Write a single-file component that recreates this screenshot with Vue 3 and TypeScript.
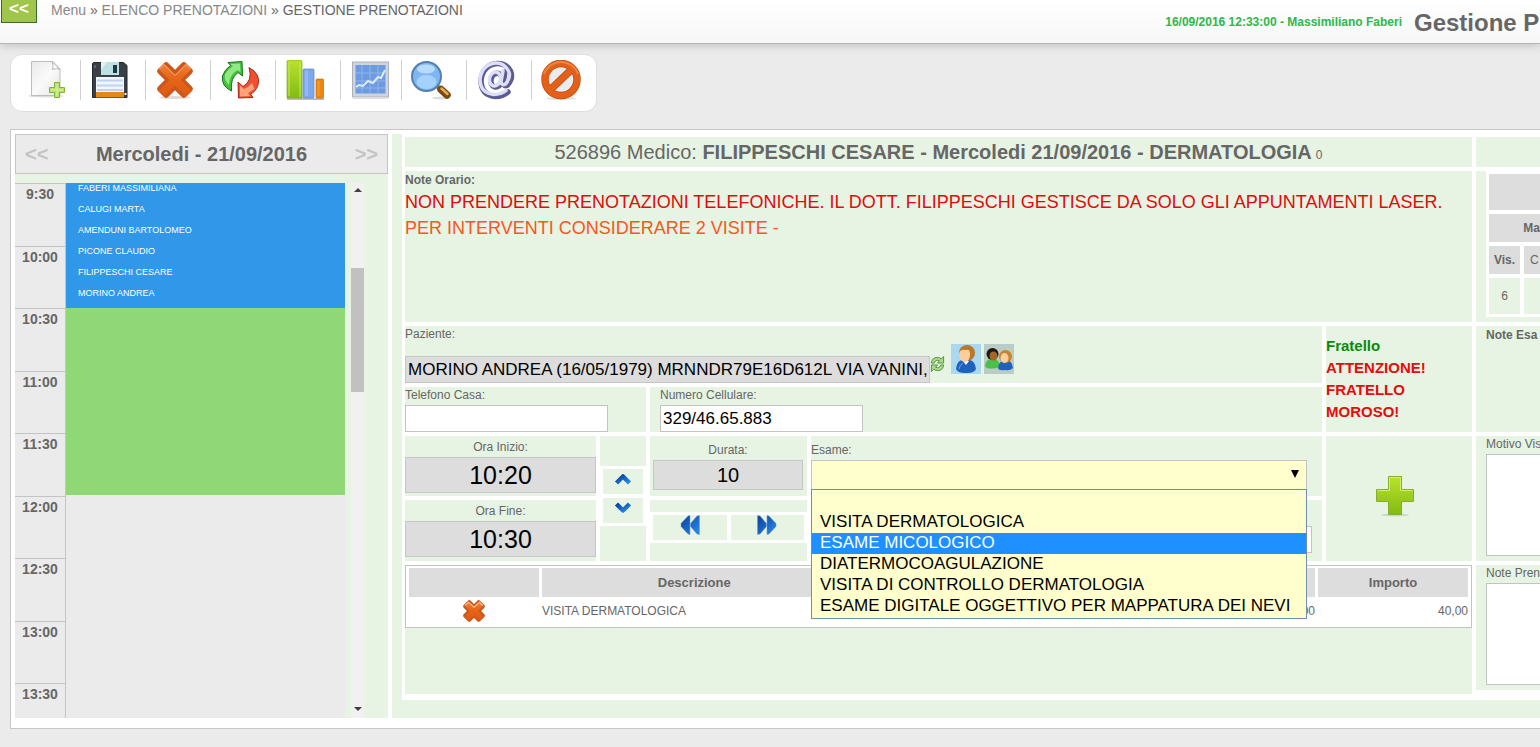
<script setup lang="ts">
import { ref } from 'vue'

const hours: string[] = ['9:30', '10:00', '10:30', '11:00', '11:30', '12:00', '12:30', '13:00', '13:30']
const bookings: string[] = [
  'FABERI MASSIMILIANA',
  'CALUGI MARTA',
  'AMENDUNI BARTOLOMEO',
  'PICONE CLAUDIO',
  'FILIPPESCHI CESARE',
  'MORINO ANDREA',
]
const exams: string[] = [
  '',
  'VISITA DERMATOLOGICA',
  'ESAME MICOLOGICO',
  'DIATERMOCOAGULAZIONE',
  'VISITA DI CONTROLLO DERMATOLOGIA',
  'ESAME DIGITALE OGGETTIVO PER MAPPATURA DEI NEVI',
]
const highlighted = ref(2)
const patient = ref('MORINO ANDREA (16/05/1979) MRNNDR79E16D612L VIA VANINI,')
const homePhone = ref('')
const mobile = ref('329/46.65.883')
const start = ref('10:20')
const end = ref('10:30')
const duration = ref('10')
const exam = ref('')
const examNote = ref('')
const reason = ref('')
const bookingNote = ref('')
</script>

<template>
  <div class="page">
    <header class="top">
      <button class="back" type="button">&lt;&lt;</button>
      <nav class="crumbs">
        <a href="#">Menu</a> » <a href="#">ELENCO PRENOTAZIONI</a> » <span class="current">GESTIONE PRENOTAZIONI</span>
      </nav>
      <div class="session">16/09/2016 12:33:00 - Massimiliano Faberi</div>
      <h1>Gestione P</h1>
    </header>

    <div class="toolbar">
      <button type="button" aria-label="Nuovo">
        <svg viewBox="0 0 40 40">
          <defs>
            <linearGradient id="paper" x1="0" y1="0" x2="1" y2="1"><stop offset="0" stop-color="#e9e9e9" /><stop offset=".5" stop-color="#fafafa" /><stop offset="1" stop-color="#e4e4e4" /></linearGradient>
            <linearGradient id="lime" x1="0" y1="0" x2="0" y2="1"><stop offset="0" stop-color="#b9e22c" /><stop offset="1" stop-color="#82bb13" /></linearGradient>
            <linearGradient id="orange" gradientUnits="userSpaceOnUse" x1="0" y1="0" x2="0" y2="40"><stop offset="0" stop-color="#f08a45" /><stop offset=".4" stop-color="#e8681c" /><stop offset="1" stop-color="#dd5510" /></linearGradient>
            <linearGradient id="azure" x1="0" y1="0" x2="1" y2="1"><stop offset="0" stop-color="#0a3f98" /><stop offset="1" stop-color="#2b8cf0" /></linearGradient>
          </defs>
          <ellipse cx="19" cy="36" rx="18" ry="1.5" fill="#ddd" />
          <path d="M4.500 1.500H26L33 9V35.500H4.500Z" fill="url(#paper)" stroke="#bdbdbd" />
          <path d="M25 1.500Q27 6 25.500 9.500Q30 7.500 33 9.500Z" fill="#fff" stroke="#b5b5b5" />
          <path d="M27.500 22.500h5v5h5v5h-5v5h-5v-5h-5v-5h5Z" fill="#b9e36b" stroke="#7fb03a" />
          <path d="M30 24v12M24 30h12" stroke="#d9f3a0" />
        </svg>
      </button>
      <button type="button" aria-label="Salva">
        <svg viewBox="0 0 40 40">
          <path d="M3.500 2.500h30l3.500 3V37.500H2.500V3.500Z" fill="#3b3f46" stroke="#24272c" />
          <rect x="4" y="5" width="2" height="3" fill="#5d6470" /><rect x="34.500" y="33" width="2" height="2" fill="#fff" />
          <rect x="11" y="2" width="18" height="13" fill="#bfe0e3" />
          <path d="M11 2h6l-6 8Z" fill="#e3f3f4" />
          <rect x="23" y="5" width="4" height="8" fill="#1f3844" />
          <rect x="6" y="17" width="28" height="15" fill="#f2f7fd" />
          <path d="M7 20.500h26M7 25.500h26M7 30h26" stroke="#bcd4f2" stroke-width="2" />
          <rect x="6" y="32" width="28" height="5.500" fill="#e08a1c" />
        </svg>
      </button>
      <button type="button" aria-label="Elimina">
        <svg viewBox="0 0 40 40">
          <ellipse cx="20" cy="37.500" rx="16" ry="1.500" fill="#e2d8d4" />
          <g fill="#c9581a" stroke="#c9581a" stroke-width="1.500"><rect x="13.500" y="1" width="13" height="38" rx="2.500" transform="rotate(45 20 20)" /><rect x="13.500" y="1" width="13" height="38" rx="2.500" transform="rotate(-45 20 20)" /></g>
          <path d="M9 3.500L20 14.500L31 3.500L36.500 9L25.500 20L36.500 31L31 36.500L20 25.500L9 36.500L3.500 31L14.500 20L3.500 9Z" fill="url(#orange)" />
          <path d="M4.500 9L9 4.500L20 15.500L31 4.500L35.500 9" fill="none" stroke="#f5a873" />
        </svg>
      </button>
      <button type="button" aria-label="Aggiorna">
        <svg viewBox="0 0 40 40">
          <path d="M8 2.500L22 1.500L22.500 16L18 12.500Q10 18 11.500 31Q1 26 2.500 16Q4.500 9.500 10.500 5.500Z" fill="#43c23c" stroke="#137516" stroke-linejoin="round" />
          <path d="M10.500 4L20 3.500L20.500 12L17.500 10Q9 15 9 25Q4 20 5 15Q7 10 13 6.500Z" fill="#92e884" />
          <path d="M29 7.500Q41 14 38 25Q35.500 32 30.500 34L33 37.500L18.500 38L18 22L23 26.500Q33 21 29 7.500Z" fill="#ef5130" stroke="#b02413" stroke-linejoin="round" />
          <path d="M20 25.500L24 29Q29 27 32 23L34.500 29L28 33L30 36L20 36.500Z" fill="#ffa27c" />
        </svg>
      </button>
      <button type="button" aria-label="Statistiche">
        <svg viewBox="0 0 40 40">
          <path d="M2 39h37" stroke="#bbb" stroke-width="2" />
          <path d="M2 1l2-1h12l1 2v36H2Z" fill="url(#lime)" stroke="#7ba91e" stroke-width=".7" />
          <path d="M4 3v33M15 3v34" stroke="#c8ec5b" stroke-width="1" />
          <rect x="18" y="9" width="11" height="29" rx="1" fill="#7ea8ec" stroke="#5d85ca" stroke-width=".7" /><rect x="20" y="11" width="3" height="25" fill="#92b7f2" />
          <rect x="31" y="19" width="7.500" height="19" rx="1" fill="#ee850f" stroke="#c96a06" stroke-width=".7" /><path d="M33.500 21v15" stroke="#f79a2e" stroke-width="2" />
        </svg>
      </button>
      <button type="button" class="narrow" aria-label="Grafico">
        <svg viewBox="0 0 40 40">
          <rect x="2.500" y="2" width="36" height="35" fill="#cfd4dd" stroke="#aab0bd" />
          <rect x="5.500" y="5" width="30" height="28.500" fill="#6c9be2" />
          <path d="M12 5v28M20 5v28M28 5v28M6 13h29M6 21h29M6 28h29" stroke="#8fb5ee" />
          <path d="M6 27l3-2 4 1 5-5 5 2 5-6 3 1 4-8" fill="none" stroke="#dfeafc" stroke-width="2" />
          <path d="M3 38h35" stroke="#ddd" stroke-width="2" />
        </svg>
      </button>
      <button type="button" aria-label="Cerca">
        <svg viewBox="0 0 40 40">
          <ellipse cx="30" cy="38" rx="9" ry="1.500" fill="#ddd" />
          <path d="M26 26l4 4" stroke="#777" stroke-width="4" />
          <path d="M30 29.500l6 5.500" stroke="#7a4a12" stroke-width="7.500" stroke-linecap="round" /><path d="M30.500 28.500l6 5.500" stroke="#e6ad55" stroke-width="2.500" stroke-linecap="round" />
          <circle cx="15.500" cy="16.500" r="14.500" fill="#7fb6f3" stroke="#5580ae" stroke-width="2" />
          <ellipse cx="15.500" cy="22" rx="10" ry="7" fill="#a5d2fd" /><ellipse cx="15" cy="9" rx="9" ry="4.500" fill="#b9dafa" />
        </svg>
      </button>
      <button type="button" aria-label="Email">
        <svg viewBox="0 0 40 40">
          <g fill="none" stroke-linecap="round">
            <g stroke="#5d5c92" stroke-width="5.500"><ellipse cx="20.500" cy="20" rx="5.500" ry="7" transform="rotate(15 20 20)" /><path d="M29 12l-2 11q1 4 4.500 2q6-7 3-14Q30 3 21 3.500Q7 5 5 20q0 15 14 16.500q8 0 13-4.500" /></g>
            <g stroke="#dedefa" stroke-width="3.500"><ellipse cx="19" cy="19" rx="5.500" ry="7" transform="rotate(15 19 19)" /><path d="M27 11l-2 11q1 4 4.500 2q6-7 3-13Q28 2.500 19.500 3Q6 4.500 4 19q0 14 14 15.500q7 0 12-4" /></g>
          </g>
        </svg>
      </button>
      <button type="button" aria-label="Annulla">
        <svg viewBox="0 0 40 40">
          <ellipse cx="20" cy="38.500" rx="15" ry="1.500" fill="#ddd" />
          <circle cx="20" cy="19.500" r="16" fill="#ececec" stroke="#c24d10" stroke-width="7.500" />
          <path d="M9 30L31 9" stroke="#c24d10" stroke-width="7.500" />
          <circle cx="20" cy="19.500" r="16" fill="none" stroke="#e2601a" stroke-width="6" /><path d="M9 30L31 9" stroke="#e2601a" stroke-width="6" />
          <path d="M3 14A18 18 0 0 1 37 14" fill="none" stroke="#ee8440" stroke-width="2" />
        </svg>
      </button>
    </div>

    <main class="panel">
      <section class="calendar">
        <div class="day">
          <button type="button">&lt;&lt;</button>
          <h2>Mercoledi - 21/09/2016</h2>
          <button type="button">&gt;&gt;</button>
        </div>
        <div class="agenda">
          <div class="slots">
            <div class="hours"><div v-for="h in hours" :key="h" class="hour">{{ h }}</div></div>
            <div class="events">
              <ul class="busy"><li v-for="b in bookings" :key="b">{{ b }}</li></ul>
              <div class="free"></div>
            </div>
          </div>
          <div class="scroll">
            <svg viewBox="0 0 8 4"><path d="M0 4L4 0L8 4Z" fill="#404040" /></svg>
            <div class="thumb"></div>
            <svg viewBox="0 0 8 4"><path d="M0 0L4 4L8 0Z" fill="#404040" /></svg>
          </div>
        </div>
      </section>

      <section class="booking">
        <div class="sheet">
          <div class="cell wide title">526896 Medico:&nbsp;<strong>FILIPPESCHI CESARE - Mercoledi 21/09/2016 - DERMATOLOGIA</strong><small>0</small></div>
          <div class="cell"></div>

          <div class="cell wide notes">
            <h3>Note Orario:</h3>
            <p class="red">NON PRENDERE PRENOTAZIONI TELEFONICHE. IL DOTT. FILIPPESCHI GESTISCE DA SOLO GLI APPUNTAMENTI LASER.</p>
            <p class="amber">PER INTERVENTI CONSIDERARE 2 VISITE -</p>
          </div>
          <div class="cell side">
            <table class="counts">
              <colgroup><col class="c-vis" /><col /></colgroup>
              <thead>
                <tr class="blank"><th colspan="2"></th></tr>
                <tr><th colspan="2" class="half">Ma</th></tr>
                <tr><th>Vis.</th><th class="cut">C</th></tr>
              </thead>
              <tbody><tr class="value"><td>6</td><td></td></tr></tbody>
            </table>
          </div>

          <div class="patient">
            <div class="cell person">
              <label for="paziente">Paziente:</label>
              <div class="line">
                <input id="paziente" v-model="patient" class="gray" readonly />
                <button type="button" class="reload" aria-label="Ricarica">
                  <svg viewBox="0 0 16 18">
                    <g fill="#a9d98a" stroke="#4f8f38"><path d="M1.500 8Q2 2 8 2Q10.500 2 12 3.500L14.500 1V8H8L10 5.500Q6 4 4.500 8Z" /><path d="M14.500 10Q14 16 8 16Q5.500 16 4 14.500L1.500 17V10H8L6 12.500Q10 14 11.500 10Z" /></g>
                  </svg>
                </button>
                <button type="button" class="face" aria-label="Anagrafica">
                  <svg viewBox="0 0 30 30">
                    <rect width="30" height="30" fill="#a9d8f0" />
                    <path d="M5 25Q6 16 12 16H19Q24 17 25 25Q23 29.500 15 29Q7 29.500 5 25Z" fill="#1e62bd" /><path d="M12 17l3 4 3-4Z" fill="#fff" />
                    <circle cx="16" cy="9" r="8" fill="#b9782a" /><path d="M8 10Q9 5 15 6Q19 5 19 10Q19 17 14 18Q8 17 8 10Z" fill="#fbcf9c" />
                    <path d="M8 25q1-5 4-6" stroke="#6aa8ea" fill="none" />
                  </svg>
                </button>
                <button type="button" class="face" aria-label="Familiari">
                  <svg viewBox="0 0 30 30">
                    <rect width="30" height="30" fill="#b9cdc6" />
                    <path d="M1 22Q2 15 7 15H11Q15 16 16 22Q13 25 8 24.500Q2 25 1 22Z" fill="#4ec04a" /><circle cx="8.500" cy="10" r="6" fill="#20180f" /><ellipse cx="9.500" cy="12" rx="4" ry="4.500" fill="#a5662b" />
                    <path d="M14 24Q15 17 19 17H25Q28 18 29 24Q26 27 21 26Q15 27 14 24Z" fill="#1e62bd" /><circle cx="21.500" cy="12.500" r="6.500" fill="#c8832c" /><ellipse cx="20.500" cy="14" rx="4" ry="5" fill="#fbcf9c" />
                  </svg>
                </button>
              </div>
            </div>
            <div class="cell phone"><label for="casa">Telefono Casa:</label><input id="casa" v-model="homePhone" /></div>
            <div class="cell phone mobile"><label for="cell">Numero Cellulare:</label><input id="cell" v-model="mobile" /></div>
          </div>
          <div class="cell warning"><p class="ok">Fratello</p><p>ATTENZIONE!</p><p>FRATELLO</p><p>MOROSO!</p></div>
          <div class="cell side"><h3>Note Esa</h3></div>

          <div class="times">
            <div class="stack halves">
              <div class="cell time"><label for="inizio">Ora Inizio:</label><input id="inizio" v-model="start" class="gray" readonly /></div>
              <div class="cell time"><label for="fine">Ora Fine:</label><input id="fine" v-model="end" class="gray" readonly /></div>
            </div>
            <div class="stack arrows">
              <div class="cell"></div>
              <div class="pair vertical">
                <button type="button" class="cell" aria-label="Prima"><svg viewBox="0 0 18 14"><path d="M2.500 11L9 4.500L15.500 11" fill="none" stroke="url(#azure)" stroke-width="4.500" stroke-linejoin="round" /></svg></button>
                <button type="button" class="cell" aria-label="Dopo"><svg viewBox="0 0 18 14"><path d="M2.500 3L9 9.500L15.500 3" fill="none" stroke="url(#azure)" stroke-width="4.500" stroke-linejoin="round" /></svg></button>
              </div>
              <div class="cell"></div>
            </div>
            <div class="stack length">
              <div class="cell duration"><label for="durata">Durata:</label><input id="durata" v-model="duration" class="gray" readonly /></div>
              <div class="cell gap"></div>
              <div class="pair">
                <button type="button" class="cell" aria-label="Riduci"><svg viewBox="0 0 20 20"><path d="M10 .500V19.500L8 19L1 11.500V8.500L8 1ZM19.500 .500V19.500L17 19L10.500 11.500V8.500L17 1Z" fill="url(#azure)" stroke="#6f9ad8" stroke-width=".5" /></svg></button>
                <button type="button" class="cell" aria-label="Aumenta"><svg viewBox="0 0 20 20"><path d="M.500 .500V19.500L3 19L9.500 11.500V8.500L3 1ZM10 .500V19.500L12 19L19 11.500V8.500L12 1Z" fill="url(#azure)" stroke="#6f9ad8" stroke-width=".5" /></svg></button>
              </div>
              <div class="cell"></div>
            </div>
            <div class="stack halves">
              <div class="cell exam">
                <label for="esame">Esame:</label>
                <div class="combo">
                  <select id="esame" v-model="exam"><option value=""></option></select>
                  <svg class="caret" viewBox="0 0 8 8"><path d="M0 0H8L4 8Z" /></svg>
                  <ul class="options" role="listbox" aria-label="Esame">
                    <li v-for="(e, i) in exams" :key="i" role="option" :aria-selected="i === highlighted" :class="{ active: i === highlighted }" @mouseenter="highlighted = i">{{ e }}</li>
                  </ul>
                </div>
              </div>
              <div class="cell detail"><input v-model="examNote" aria-label="Dettaglio esame" /></div>
            </div>
          </div>
          <div class="cell add">
            <button type="button" aria-label="Aggiungi">
              <svg viewBox="0 0 42 42"><ellipse cx="21" cy="40" rx="14" ry="1.500" fill="#cbd8c4" /><path d="M14.500 1.500h13v13h12v12h-12v13h-13v-13h-12v-12h12Z" fill="url(#lime)" stroke="#86ad2c" /><path d="M3.500 15.500h12V2.500h11v13h12" fill="none" stroke="#d3f06d" /></svg>
            </button>
          </div>
          <div class="cell side area"><label for="motivo">Motivo Vis</label><textarea id="motivo" v-model="reason"></textarea></div>

          <div class="cell wide">
            <table class="items">
              <colgroup><col class="c-del" /><col /><col /><col class="c-num" /><col class="c-sum" /></colgroup>
              <thead><tr><th></th><th>Descrizione</th><th></th><th></th><th>Importo</th></tr></thead>
              <tbody>
                <tr>
                  <td>
                    <button type="button" aria-label="Rimuovi">
                      <svg viewBox="0 0 40 40">
                        <g fill="#c9581a" stroke="#c9581a" stroke-width="2"><rect x="12" y="0" width="16" height="40" rx="3" transform="rotate(45 20 20)" /><rect x="12" y="0" width="16" height="40" rx="3" transform="rotate(-45 20 20)" /></g>
                        <path d="M10 3L20 12L30 3L37 10L28 20L37 30L30 37L20 28L10 37L3 30L12 20L3 10Z" fill="url(#orange)" />
                        <path d="M4 10L10 4L20 13L30 4L36 10" fill="none" stroke="#ffc291" stroke-width="2" />
                      </svg>
                    </button>
                  </td>
                  <td>VISITA DERMATOLOGICA</td><td></td><td class="num">00</td><td class="num">40,00</td>
                </tr>
              </tbody>
            </table>
          </div>
          <div class="cell side area last"><label for="noteprenotazione">Note Pren</label><textarea id="noteprenotazione" v-model="bookingNote"></textarea></div>
        </div>
      </section>
    </main>
  </div>
</template>

<style>
html, body { background: #ebebeb; }
</style>

<style scoped>
* { box-sizing: border-box; }
.page { min-height: 100vh; overflow: hidden; background: #ebebeb; color: #666; font: 12px/14px "Liberation Sans", Arial, sans-serif; }
button { margin: 0; padding: 0; border: 0; background: none; font: inherit; color: inherit; cursor: pointer; }
h1, h2, h3, p, ul { margin: 0; padding: 0; list-style: none; }
h3 { padding-top: 1px; font-size: 12px; line-height: 16px; }
svg { display: block; }
label { display: block; line-height: 17px; }
input, select, textarea { display: block; margin: 0; border: 1px solid #c3c3c3; border-radius: 0; background: #fff; color: #000; font: 17px "Liberation Sans", Arial, sans-serif; outline: 0; }
input { height: 27px; padding: 0 2px; }
input.gray { background: #ddd; border-color: #c6c6c6; }

.top { display: flex; align-items: flex-start; height: 44px; background: linear-gradient(#fff, #f7f7f7); border-bottom: 1px solid #b2b6b2; box-shadow: 0 1px 9px #bbb; white-space: nowrap; }
.back { width: 36px; height: 23px; margin-left: 1px; padding-bottom: 5px; border: 1px solid #3a6b35; border-top: 0; background: #9fc54d; color: #fff; font-size: 17px; font-weight: bold; line-height: 17px; }
.crumbs { margin-left: 14px; font-size: 14px; line-height: 20px; color: #666; }
.crumbs a { color: #888; text-decoration: none; }
.session { margin: 14px 12px 0 auto; color: #2db84b; font-weight: bold; line-height: 16px; }
h1 { width: 126px; margin-top: 8px; font-size: 24px; line-height: 30px; color: #666; }

.toolbar { display: flex; width: max-content; height: 58px; margin: 10px 0 0 10px; padding-top: 5px; border: 1px solid #dedede; border-radius: 12px; background: #fff; }
.toolbar button { height: 40px; padding: 0 15px 0 9px; border-left: 1px solid #d0d0d0; }
.toolbar button:first-child { padding: 0 13px 0 16px; border-left: 0; }
.toolbar .narrow { padding-right: 11px; }
.toolbar svg { width: 40px; height: 40px; }

.panel { display: flex; gap: 4px; margin: 17px 0 0 10px; padding: 4px 0 10px 4px; border: 1px solid #c9c5c9; border-right: 0; background: #fff; }
.calendar { flex: 0 0 373px; background: #e7f4e4; }
.day { display: flex; align-items: center; justify-content: space-between; height: 40px; padding: 0 9px; border: 1px solid #c4c4c4; background: #ebebeb; }
.day h2 { font-size: 20px; line-height: 24px; }
.day button { color: #c4c4c4; font-size: 20px; font-weight: bold; }
.agenda { display: flex; gap: 6px; height: 535px; margin-top: 9px; }
.slots { display: flex; width: 330px; overflow: hidden; background: #ebebeb; }
.hours { display: grid; grid-auto-rows: 1fr; width: 51px; height: 563px; border-right: 1px solid #c4c4c4; }
.hour { padding-top: 2px; border-top: 1px solid #c4c4c4; font-size: 14px; font-weight: bold; line-height: 16px; text-align: center; }
.events { flex: 1; }
.busy { display: flex; flex-direction: column; gap: 10px; height: 125px; padding-left: 12px; background: #3097e9; color: #fff; font-size: 9px; line-height: 11px; }
.free { height: 187px; background: #90d877; }
.scroll { display: flex; flex-direction: column; align-items: center; width: 13px; padding: 5px 0 7px; background: #f1f1f1; }
.scroll svg { width: 8px; height: 4px; }
.thumb { width: 13px; height: 124px; margin: 76px 0 auto; background: #c1c1c1; }

.booking { flex: 1; min-width: 0; padding: 0 0 18px 10px; background: #e7f4e4; }
.sheet { display: grid; grid-template-columns: minmax(0, 1fr) 146px 64px; grid-template-rows: 30px 151px 106px 125px 129px; gap: 4px; padding: 3px 0 6px 3px; background: #fff; }
.cell { min-width: 0; background: #e7f4e4; }
.wide { grid-column: span 2; }
.title { display: flex; align-items: baseline; justify-content: center; font-size: 20px; line-height: 30px; white-space: nowrap; }
.title small { margin-left: 4px; font-size: 12px; }
.notes p { font-size: 18px; line-height: 26px; }
.notes h3 { margin-bottom: 1px; }
.red { color: #e00b0b; }
.amber { color: #f6581a; }
.side { padding-left: 10px; white-space: nowrap; }

.counts { width: 54px; margin: 0; background: #fff; table-layout: fixed; border-collapse: separate; border-spacing: 0; }
.counts th, .counts td { height: 32px; padding: 0; border: solid #fff; border-width: 4px 0 0 3px; background: #ddd; text-align: center; }
.counts th + th, .counts td + td { border-left-width: 4px; }
.counts .blank th { height: 39px; border-top-width: 3px; }
.counts .half { text-align: right; }
.c-vis { width: 34px; }
.counts .cut { padding-left: 6px; font-weight: normal; text-align: left; }
.counts .value td { height: 43px; border-bottom: 3px solid #fff; background: #e7f4e4; }

.patient { display: grid; grid-template-columns: 241px 1fr; grid-template-rows: 57px 45px; gap: 4px; }
.person { grid-column: span 2; }
.line { display: flex; align-items: flex-end; height: 40px; }
#paziente { width: 525px; padding-right: 0; }
.reload { margin: 0 6px 10px 0; }
.reload svg { width: 15px; height: 18px; }
.face { margin: 0 3px 9px 0; }
.face svg { width: 30px; height: 30px; }
.phone input { width: 203px; margin-top: 1px; }
.mobile { padding-left: 10px; }
.warning { padding-top: 9px; color: #e60c0c; font-size: 15px; font-weight: bold; line-height: 22px; }
.warning .ok { color: #0a8a0a; }

.times { display: grid; grid-template-columns: 191px 46px 157px minmax(0, 1fr); gap: 4px; }
.stack { display: grid; min-width: 0; }
.halves { grid-template-rows: 60px 61px; gap: 4px; }
.arrows { grid-template-rows: 30px 60px 35px; }
.length { grid-template-rows: 60px 16px 31px 18px; }
.gap { margin-top: 4px; }
.pair { display: grid; grid-template-columns: 1fr 1fr; gap: 4px; padding: 3px; }
.vertical { grid-template-columns: 1fr; grid-template-rows: 1fr 1fr; }
.pair button { display: flex; align-items: flex-start; justify-content: center; }
.pair svg { width: 20px; height: 20px; }
.vertical button { padding-top: 3px; }
.vertical svg { width: 18px; height: 14px; }
.time { padding-top: 3px; text-align: center; }
.time input { width: 100%; height: 36px; margin-top: 1px; font-size: 25px; text-align: center; }
.duration { padding: 6px 4px 0 3px; text-align: center; }
.duration input { width: 100%; height: 30px; margin-top: 1px; font-size: 20px; text-align: center; }
.exam { padding: 6px 15px 0 0; }
.combo { position: relative; margin-top: 1px; }
.combo select { width: 100%; height: 30px; padding: 0 24px 0 4px; appearance: none; background: #ffffcd; }
.caret { position: absolute; top: 10px; right: 8px; width: 8px; height: 8px; pointer-events: none; }
.options { position: absolute; z-index: 2; top: 29px; left: 0; right: 0; padding: 1px 0; border: 1px solid #6f8fb0; background: #ffffcd; color: #000; font-size: 17px; line-height: 19px; white-space: nowrap; }
.options li { height: 21px; padding-left: 8px; }
.options .active { background: #1e90ff; color: #fff; }
.detail { padding: 26px 10px 0 0; }
.detail input { width: 100%; }
.add { display: flex; align-items: center; justify-content: center; }
.add button { padding: 0 8px 6px 0; }
.add svg { width: 42px; height: 42px; }
.area textarea { width: 100%; height: 102px; margin-top: 1px; border-right: 0; resize: none; }
.last { height: 125px; }

.items { width: 100%; border: 1px solid #c3c3c3; background: #fff; border-spacing: 3px 0; padding: 2px 0; table-layout: fixed; }
.items th { height: 29px; padding: 0; background: #ddd; font-size: 13px; }
.items td { height: 28px; padding: 0; }
.c-del { width: 130px; }
.c-num { width: 158px; }
.c-sum { width: 150px; }
.num { text-align: right; }
.items button { display: block; margin: 0 auto; }
.items svg { width: 22px; height: 22px; }
</style>
